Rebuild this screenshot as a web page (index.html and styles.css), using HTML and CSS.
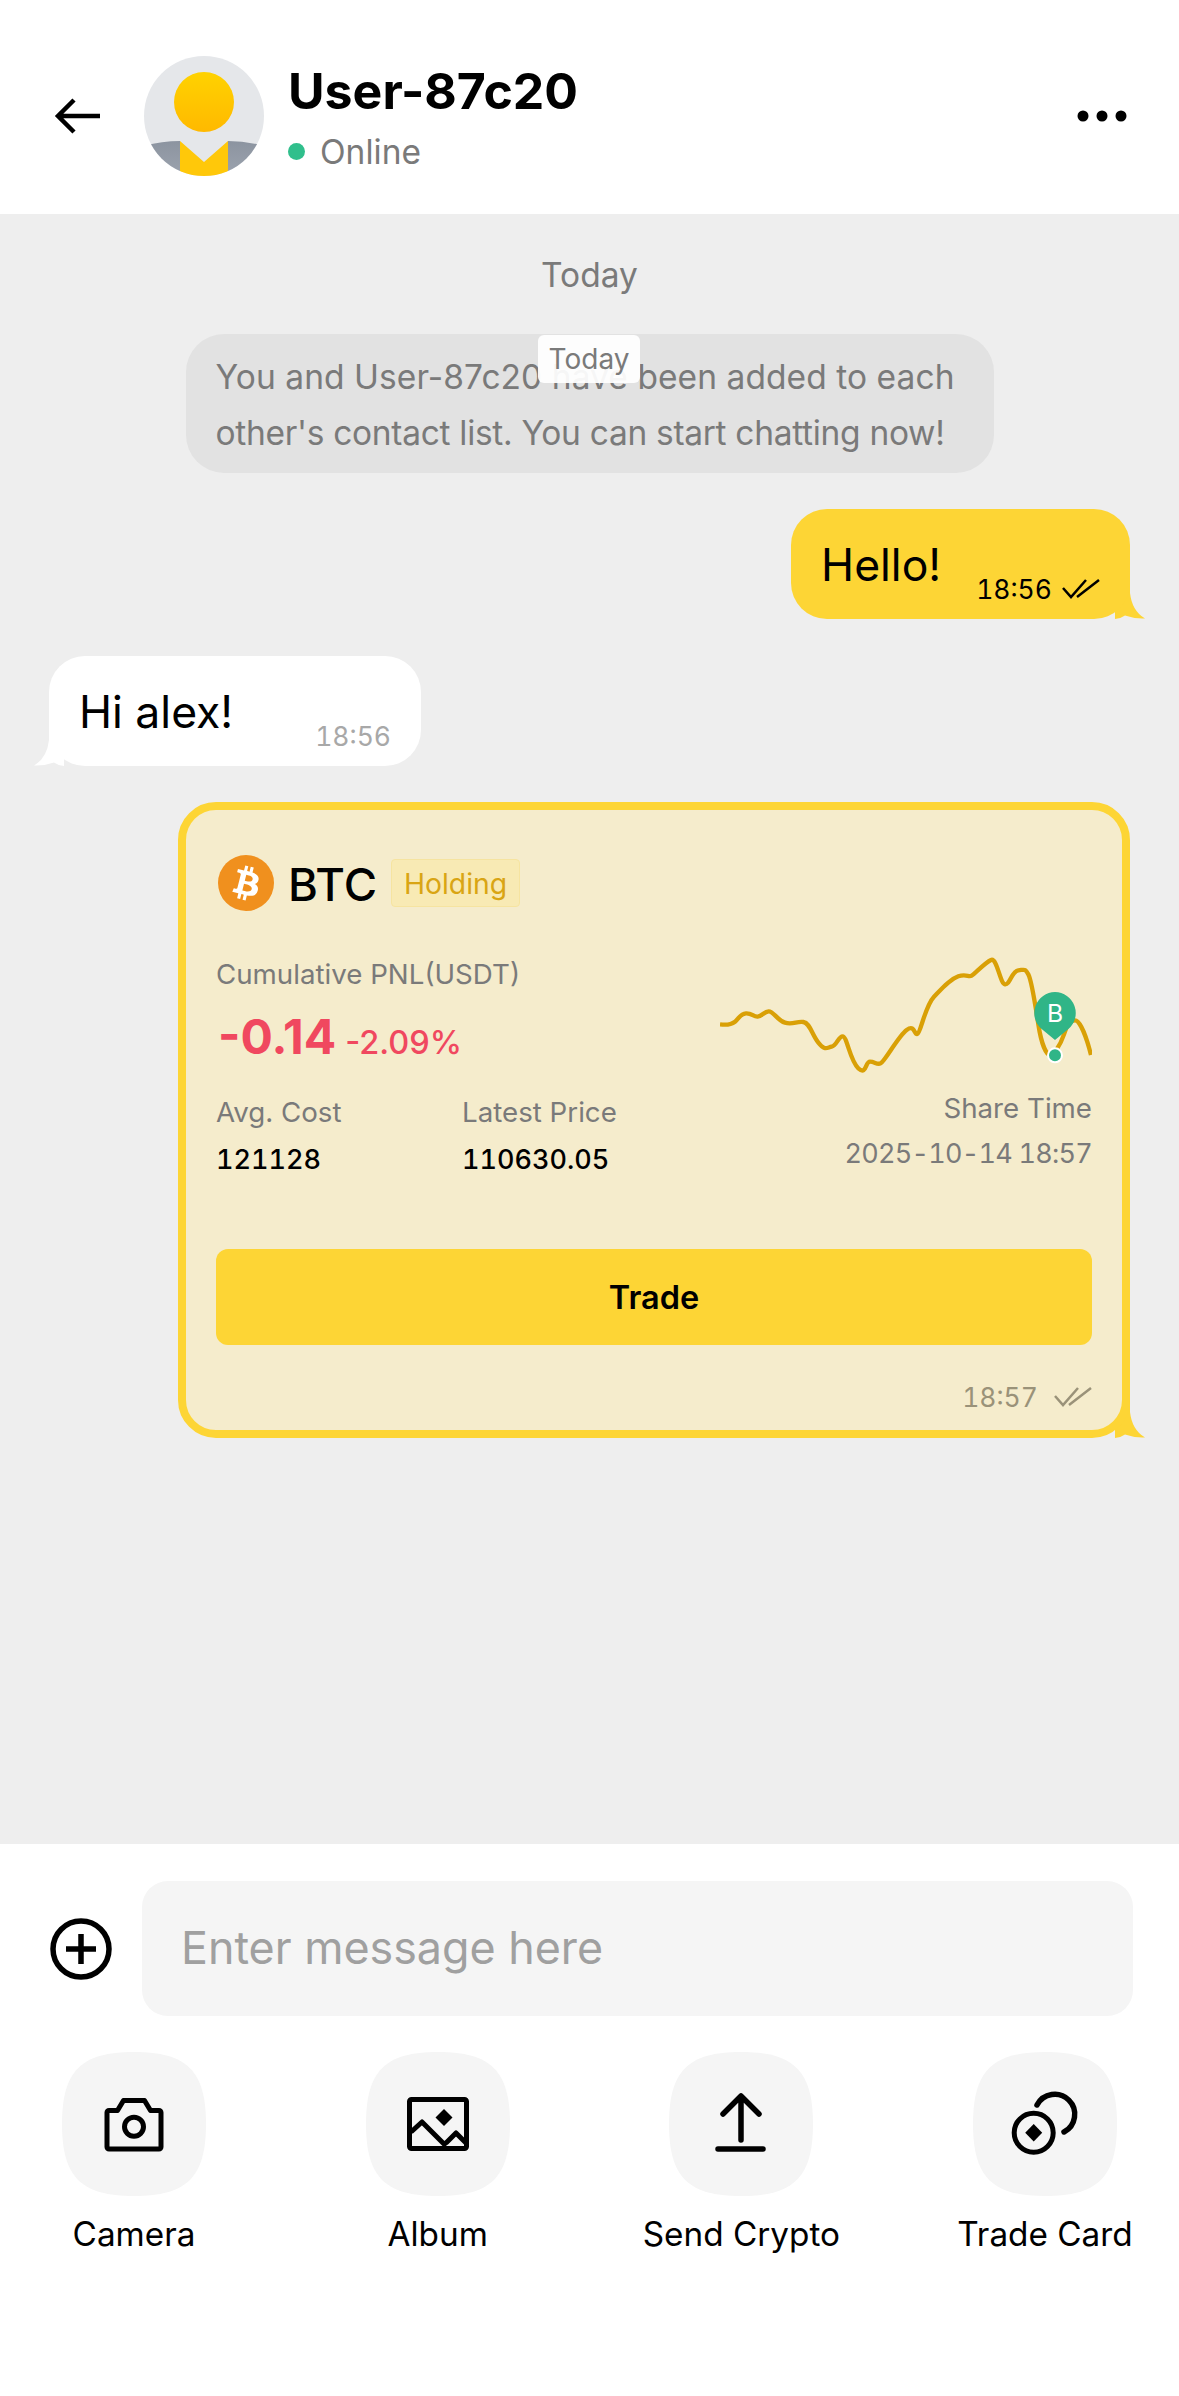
FILE: index.html
```html
<!DOCTYPE html>
<html lang="en">
<head>
<meta charset="utf-8">
<title>Chat</title>
<link rel="stylesheet" href="styles.css">
</head>
<body>
<div class="page">
  <header class="header">
    <svg class="back" viewBox="0 0 50 40"><path d="M46 20H5M20 4 4 20l16 16"/></svg>
    <svg class="avatar" viewBox="0 0 120 120">
      <defs>
        <clipPath id="round"><circle cx="60" cy="60" r="60"/></clipPath>
        <linearGradient id="head" x1="0" y1="0" x2="0" y2="1"><stop offset="0" stop-color="#FFD200"/><stop offset="1" stop-color="#FFB900"/></linearGradient>
        <linearGradient id="suit" x1="0" y1="0" x2="0" y2="1"><stop offset="0" stop-color="#8C94A0"/><stop offset="1" stop-color="#9CA3AE"/></linearGradient>
      </defs>
      <g clip-path="url(#round)">
        <rect width="120" height="120" fill="#E5E7EA"/>
        <circle cx="60" cy="46" r="30" fill="url(#head)"/>
        <path d="M0 120V90Q18 85 36 85V120zM120 120V90Q102 85 84 85V120z" fill="url(#suit)"/>
        <path d="M36 85 60 106 84 85V120H36z" fill="#FFC80A"/>
      </g>
    </svg>
    <div class="who">
      <div class="name">User-87c20</div>
      <div class="status"><span class="dot"></span>Online</div>
    </div>
    <svg class="more" viewBox="0 0 50 12"><circle cx="6" cy="6" r="5.5"/><circle cx="25" cy="6" r="5.5"/><circle cx="44" cy="6" r="5.5"/></svg>
  </header>

  <main class="chat">
    <div class="date">Today</div>
    <div class="sticky">Today</div>
    <div class="system"><div class="sys-a">You and User-87c20 have been added to each</div><div class="sys-b">other's contact list. You can start chatting now!</div></div>

    <div class="bubble out">
      <span class="msg">Hello!</span>
      <span class="time">18:56<svg class="checks" viewBox="0 0 38 20"><path d="M1 9l8 9L24 1M15 18 37 1"/></svg></span>
      <svg class="tail tail-r tail-y" viewBox="0 0 30 40"><path d="M0 0H15V14Q17 32 30 39.500 20 40 10 36.500 5 40 0 40z"/></svg>
    </div>

    <div class="bubble in">
      <svg class="tail tail-l tail-w" viewBox="0 0 30 40"><path d="M0 0H15V14Q17 32 30 39.500 20 40 10 36.500 5 40 0 40z"/></svg>
      <span class="msg">Hi alex!</span>
      <span class="time">18:56</span>
    </div>

    <section class="card">
      <svg class="tail tail-r tail-y tail-card" viewBox="0 0 30 40"><path d="M0 0H15V14Q17 32 30 39.500 20 40 10 36.500 5 40 0 40z"/></svg>
      <div class="card-head">
        <svg class="coin" viewBox="0 0 32 32"><circle cx="16" cy="16" r="16" fill="#F0901E"/><path fill="#fff" d="M23.189 14.020c.314-2.096-1.283-3.223-3.465-3.975l.708-2.840-1.728-.430-.690 2.765c-.454-.114-.920-.220-1.385-.326l.695-2.783L15.596 6l-.708 2.839c-.376-.086-.746-.170-1.104-.260l.002-.009-2.384-.595-.460 1.846s1.283.294 1.256.312c.700.175.826.638.805 1.006l-.806 3.235c.048.012.110.030.180.057l-.183-.045-1.130 4.532c-.086.212-.303.531-.793.410.018.025-1.256-.313-1.256-.313l-.858 1.978 2.250.561c.418.105.828.215 1.231.318l-.715 2.872 1.727.430.708-2.840c.472.127.930.245 1.378.357l-.706 2.828 1.728.430.715-2.866c2.948.558 5.164.333 6.097-2.333.752-2.146-.037-3.385-1.588-4.192 1.130-.260 1.980-1.003 2.207-2.538zm-3.950 5.538c-.533 2.147-4.148.986-5.320.695l.950-3.805c1.172.293 4.929.872 4.370 3.110zm.535-5.569c-.487 1.953-3.495.960-4.470.717l.860-3.450c.975.243 4.118.696 3.610 2.733z"/></svg>
        <span class="symbol">BTC</span>
        <span class="tag">Holding</span>
      </div>
      <div class="card-body">
        <div class="card-left">
          <div class="label">Cumulative PNL(USDT)</div>
          <div class="pnl"><span class="pnl-val">-0.14</span><span class="pnl-pct">-2.09%</span></div>
          <div class="stats">
            <div class="stat"><div class="label">Avg. Cost</div><div class="value">121128</div></div>
            <div class="stat"><div class="label">Latest Price</div><div class="value">110630.05</div></div>
          </div>
        </div>
        <div class="card-right">
          <svg class="chart" viewBox="90 69 1116 405">
            <path class="line" d="M90 280C105 282 122 282 135 272S150 248 168 247 190 258 203 257 222 242 236 241 262 268 285 275 320 270 340 273 365 310 385 335 410 350 425 347 445 316 458 316 480 390 505 412 525 392 540 392 560 402 572 397 625 315 650 297 672 312 682 309 705 225 732 197 780 145 805 136 835 140 845 134 885 95 903 87 930 158 945 160 965 120 985 118 1005 112 1015 130 1035 215 1045 280 1070 370 1080 372 1110 345 1122 310 1140 268 1155 268 1190 320 1203 372"/>
            <path class="pin" d="M1095 183a63 63 0 0 1 40 111l-40 33-40-33a63 63 0 0 1 40-111z"/>
            <text class="pin-text" x="1095" y="272" text-anchor="middle">B</text>
            <circle class="pin-dot" cx="1095" cy="373" r="21"/>
          </svg>
          <div class="label">Share Time</div>
          <div class="label share-date">2025-10-14 18:57</div>
        </div>
      </div>
      <div class="trade">Trade</div>
      <div class="card-time">18:57<svg class="checks" viewBox="0 0 38 20"><path d="M1 9l8 9L24 1M15 18 37 1"/></svg></div>
    </section>
  </main>

  <footer class="panel">
    <div class="input-row">
      <svg class="plus" viewBox="0 0 62 62"><circle cx="31" cy="31" r="28"/><path d="M31 16V46M16 31H46"/></svg>
      <div class="input">Enter message here</div>
    </div>
    <div class="actions">
      <div class="action">
        <svg class="tile" viewBox="0 0 144 144"><path class="tile-bg" d="M72 0C125 0 144 19 144 72S125 144 72 144 0 125 0 72 19 0 72 0z"/><path d="M47 58.500h8.500l6-10h21l6 10H97a2 2 0 0 1 2 2V95a2 2 0 0 1-2 2H47a2 2 0 0 1-2-2V60.500a2 2 0 0 1 2-2z"/><circle cx="72" cy="74.700" r="9.500"/></svg>
        <span class="action-label">Camera</span>
      </div>
      <div class="action">
        <svg class="tile" viewBox="0 0 144 144"><path class="tile-bg" d="M72 0C125 0 144 19 144 72S125 144 72 144 0 125 0 72 19 0 72 0z"/><rect x="43.500" y="47.500" width="57" height="49" rx="2"/><path class="solid" d="M78 57l8.500 8.500L78 74l-8.500-8.500z"/><path d="M45 80l11-10 24 24M80 91l10-10 10 10"/></svg>
        <span class="action-label">Album</span>
      </div>
      <div class="action">
        <svg class="tile" viewBox="0 0 144 144"><path class="tile-bg" d="M72 0C125 0 144 19 144 72S125 144 72 144 0 125 0 72 19 0 72 0z"/><path class="rnd" d="M72 88V46M54 62 72 44l18 18M49 97H94"/></svg>
        <span class="action-label">Send Crypto</span>
      </div>
      <div class="action">
        <svg class="tile" viewBox="0 0 144 144"><path class="tile-bg" d="M72 0C125 0 144 19 144 72S125 144 72 144 0 125 0 72 19 0 72 0z"/><circle cx="60.700" cy="80.700" r="19.500"/><path class="solid" d="M60.700 72l8.500 8.700-8.500 8.700-8.500-8.700z"/><path class="rnd" d="M64 53A20 20 0 1 1 91 80"/></svg>
        <span class="action-label">Trade Card</span>
      </div>
    </div>
  </footer>
</div>
</body>
</html>
```
FILE: styles.css
```css
* { box-sizing: border-box; }
html, body { margin: 0; padding: 0; }
body { font-family: "Inter", "Liberation Sans", sans-serif; color: #000; background: #fff; }
.page { width: 1179px; height: 2396px; display: flex; flex-direction: column; overflow: hidden; }

.header { height: 214px; background: #fff; display: flex; align-items: center; padding: 18px 52px 0 54px; flex: none; }
.back { width: 50px; height: 40px; fill: none; stroke: #000; stroke-width: 4.5; flex: none; margin-right: 40px; }
.avatar { width: 120px; height: 120px; flex: none; margin-right: 24px; }
.who { flex: 1; }
.name { font-size: 50px; font-weight: 700; line-height: 60px; }
.status { font-size: 33.5px; line-height: 40px; color: #7a7a7a; margin-top: 11px; display: flex; align-items: center; }
.dot { width: 17px; height: 17px; border-radius: 50%; background: #30BF8C; margin-right: 15px; }
.more { width: 50px; height: 12px; fill: #000; flex: none; }

.chat { flex: 1; background: #eeeeee; position: relative; isolation: isolate; padding: 41px 49px 0; display: flex; flex-direction: column; align-items: flex-end; }
.date { align-self: center; font-size: 33.5px; line-height: 40px; color: #7a7a7a; }
.sticky { position: absolute; top: 121px; left: 538px; width: 102px; height: 48px; background: rgba(255,255,255,.93); border-radius: 6px; font-size: 28px; line-height: 48px; text-align: center; color: #7a7a7a; z-index: 1; }
.system { align-self: center; width: 808px; margin-top: 39px; padding: 15px 30px 12px; background: #e2e2e2; border-radius: 38px; font-size: 33.5px; line-height: 56px; color: #7a7a7a; white-space: nowrap; }
.sys-a { letter-spacing: .07px; }
.sys-b { letter-spacing: -.3px; }

.bubble { position: relative; display: flex; padding: 28px 30px 17px; border-radius: 36px; }
.bubble.out { background: #FDD535; margin-top: 36px; }
.bubble.in { background: #fff; margin-top: 37px; align-self: flex-start; }
.msg { font-size: 44.5px; line-height: 56px; margin-bottom: 9px; }
.time { align-self: flex-end; font-size: 26.5px; line-height: 30px; font-variant-numeric: tabular-nums; display: flex; align-items: center; margin-left: 35px; margin-bottom: -2px; }
.in .time { color: #a8a8a8; margin-left: 82px; }
.checks { width: 38px; height: 20px; margin-left: 10px; fill: none; stroke: currentColor; stroke-width: 2.5; }
.tail { position: absolute; width: 30px; height: 40px; bottom: 0; z-index: -1; }
.tail-r { right: -15px; }
.tail-l { left: -15px; transform: scaleX(-1); }
.tail-y { fill: #FDD535; }
.tail-w { fill: #fff; }
.tail-card { right: -23px; bottom: -8px; }

.card { position: relative; width: 952px; margin-top: 36px; padding: 45px 30px 13px; background: #F5ECCC; border: 8px solid #FDD535; border-radius: 38px; }
.card-head { display: flex; align-items: center; height: 56px; }
.coin { width: 56px; height: 56px; flex: none; margin-left: 2px; }
.symbol { font-size: 45.5px; font-weight: 500; margin-left: 14px; padding-top: 2px; }
.tag { height: 48px; line-height: 48px; margin-left: 14px; padding: 0 12px; font-size: 28.3px; color: #D9A514; background: #F8EAB4; border: 1px solid #F6E4A0; border-radius: 4px; }
.card-body { display: flex; justify-content: space-between; margin-top: 43px; }
.label { font-size: 27.7px; line-height: 40px; color: #7a7a7a; }
.pnl { display: flex; align-items: baseline; height: 56px; margin-top: 15px; line-height: 56px; color: #F0485F; }
.pnl-val { font-size: 48px; font-weight: 700; margin-left: 2px; }
.pnl-pct { font-size: 32.5px; font-weight: 500; margin-left: 9px; }
.stats { display: grid; grid-template-columns: 246px auto; margin-top: 27px; }
.value { font-size: 27px; line-height: 40px; font-weight: 500; margin-top: 8px; font-variant-numeric: tabular-nums; }
.card-right { display: flex; flex-direction: column; align-items: flex-end; }
.chart { width: 372px; height: 135px; display: block; margin-bottom: -1px; }
.line { fill: none; stroke: #D9A006; stroke-width: 13; }
.pin { fill: #30B587; }
.pin-text { fill: #fff; font-size: 74px; }
.pin-dot { fill: #30B587; stroke: #fff; stroke-width: 6; }
.share-date { margin-top: 6px; font-size: 27px; letter-spacing: -.75px; font-variant-numeric: tabular-nums; }
.trade { height: 96px; margin-top: 69px; background: #FDD535; border-radius: 12px; text-align: center; font-size: 32.5px; font-weight: 600; line-height: 98px; }
.card-time { display: flex; justify-content: flex-end; align-items: center; margin-top: 32px; font-size: 26.5px; line-height: 40px; font-variant-numeric: tabular-nums; color: #9a9279; }
.card-time .checks { margin-left: 16px; }

.panel { height: 552px; background: #fff; padding: 37px 46px 0 50px; flex: none; }
.input-row { display: flex; align-items: center; gap: 30px; }
.plus { width: 62px; height: 62px; flex: none; fill: none; stroke: #000; stroke-width: 5.5; }
.input { flex: 1; height: 135px; background: #f5f5f5; border-radius: 26px; padding-left: 39px; font-size: 44.8px; line-height: 135px; color: #a0a0a0; }
.actions { display: flex; justify-content: space-between; margin: 36px 16px 0 12px; }
.action { width: 144px; display: flex; flex-direction: column; align-items: center; }
.tile { width: 144px; height: 144px; fill: none; stroke: #000; stroke-width: 5; stroke-linejoin: round; }
.tile-bg { fill: #f5f5f5; stroke: none; }
.solid { fill: #000; stroke: none; }
.rnd { stroke-linecap: round; stroke-width: 5.5; }
.action-label { margin-top: 18px; font-size: 33.3px; line-height: 40px; white-space: nowrap; }
```
